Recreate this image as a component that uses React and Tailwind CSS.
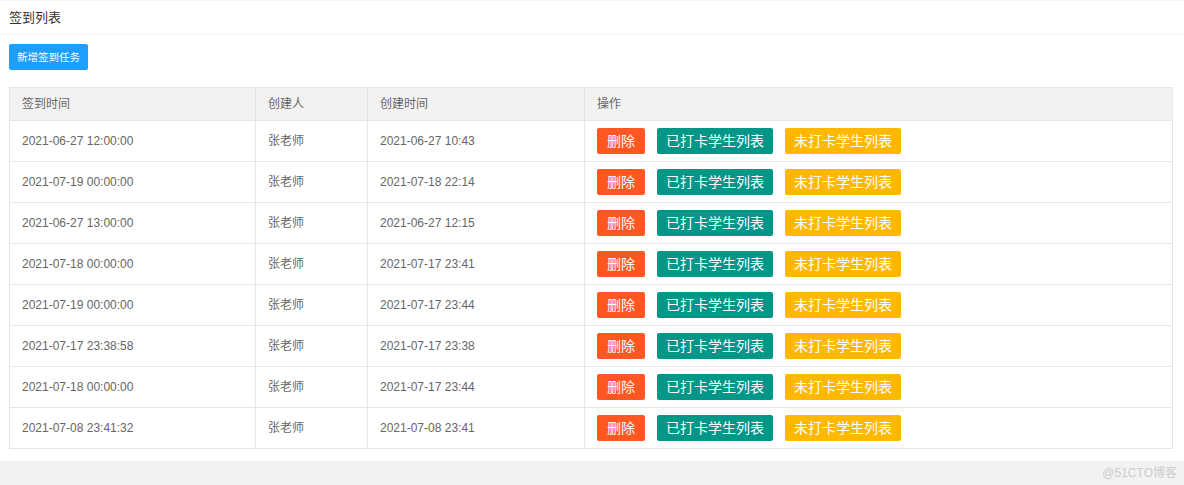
import React from "react";

const rows = [
  ["2021-06-27 12:00:00", "张老师", "2021-06-27 10:43"],
  ["2021-07-19 00:00:00", "张老师", "2021-07-18 22:14"],
  ["2021-06-27 13:00:00", "张老师", "2021-06-27 12:15"],
  ["2021-07-18 00:00:00", "张老师", "2021-07-17 23:41"],
  ["2021-07-19 00:00:00", "张老师", "2021-07-17 23:44"],
  ["2021-07-17 23:38:58", "张老师", "2021-07-17 23:38"],
  ["2021-07-18 00:00:00", "张老师", "2021-07-17 23:44"],
  ["2021-07-08 23:41:32", "张老师", "2021-07-08 23:41"],
];

const font = { fontFamily: '"Liberation Sans", Arial, "Noto Sans CJK SC", sans-serif' };

export default function App() {
  return (
    <div
      className="w-[1184px] h-[485px] bg-white flex flex-col text-[#666]"
      style={font}
    >
      <div className="h-[35px] border-t border-b border-[#f3f3f3] flex items-center pl-[9px] text-[13px] text-[#333] leading-none">
        签到列表
      </div>
      <div className="pl-[9px] pt-[9px]">
        <button className="h-[26px] w-[79px] bg-[#1E9FFF] text-white text-[10.5px] rounded-[2px] flex items-center justify-center leading-none">
          新增签到任务
        </button>
      </div>
      <div className="ml-[9px] mt-[17px] w-[1164px] border border-[#e6e6e6] text-[12px]">
        <div className="grid grid-cols-[245px_112px_217px_1fr] h-[32px] bg-[#f2f2f2] leading-none">
          <div className="flex items-center px-[12px]">签到时间</div>
          <div className="flex items-center px-[12px] border-l border-[#e6e6e6]">创建人</div>
          <div className="flex items-center px-[12px] border-l border-[#e6e6e6]">创建时间</div>
          <div className="flex items-center px-[12px] border-l border-[#e6e6e6]">操作</div>
        </div>
        {rows.map((r, i) => (
          <div
            key={i}
            className="grid grid-cols-[245px_112px_217px_1fr] h-[41px] border-t border-[#e6e6e6] leading-none"
          >
            <div className="flex items-center px-[12px]">{r[0]}</div>
            <div className="flex items-center px-[12px] border-l border-[#e6e6e6]">{r[1]}</div>
            <div className="flex items-center px-[12px] border-l border-[#e6e6e6]">{r[2]}</div>
            <div className="flex items-center px-[12px] gap-[12px] border-l border-[#e6e6e6]">
              <button className="h-[26px] w-[48px] bg-[#FF5722] text-white text-[14px] rounded-[2px] flex items-center justify-center">
                删除
              </button>
              <button className="h-[26px] w-[116px] bg-[#009688] text-white text-[14px] rounded-[2px] flex items-center justify-center">
                已打卡学生列表
              </button>
              <button className="h-[26px] w-[116px] bg-[#FFB800] text-white text-[14px] rounded-[2px] flex items-center justify-center">
                未打卡学生列表
              </button>
            </div>
          </div>
        ))}
      </div>
      <div className="mt-[12px] flex-1 bg-[#f2f2f2] flex items-center justify-end pr-[7px] text-[12px] text-[#cdcdcd] leading-none">
        @51CTO博客
      </div>
    </div>
  );
}
